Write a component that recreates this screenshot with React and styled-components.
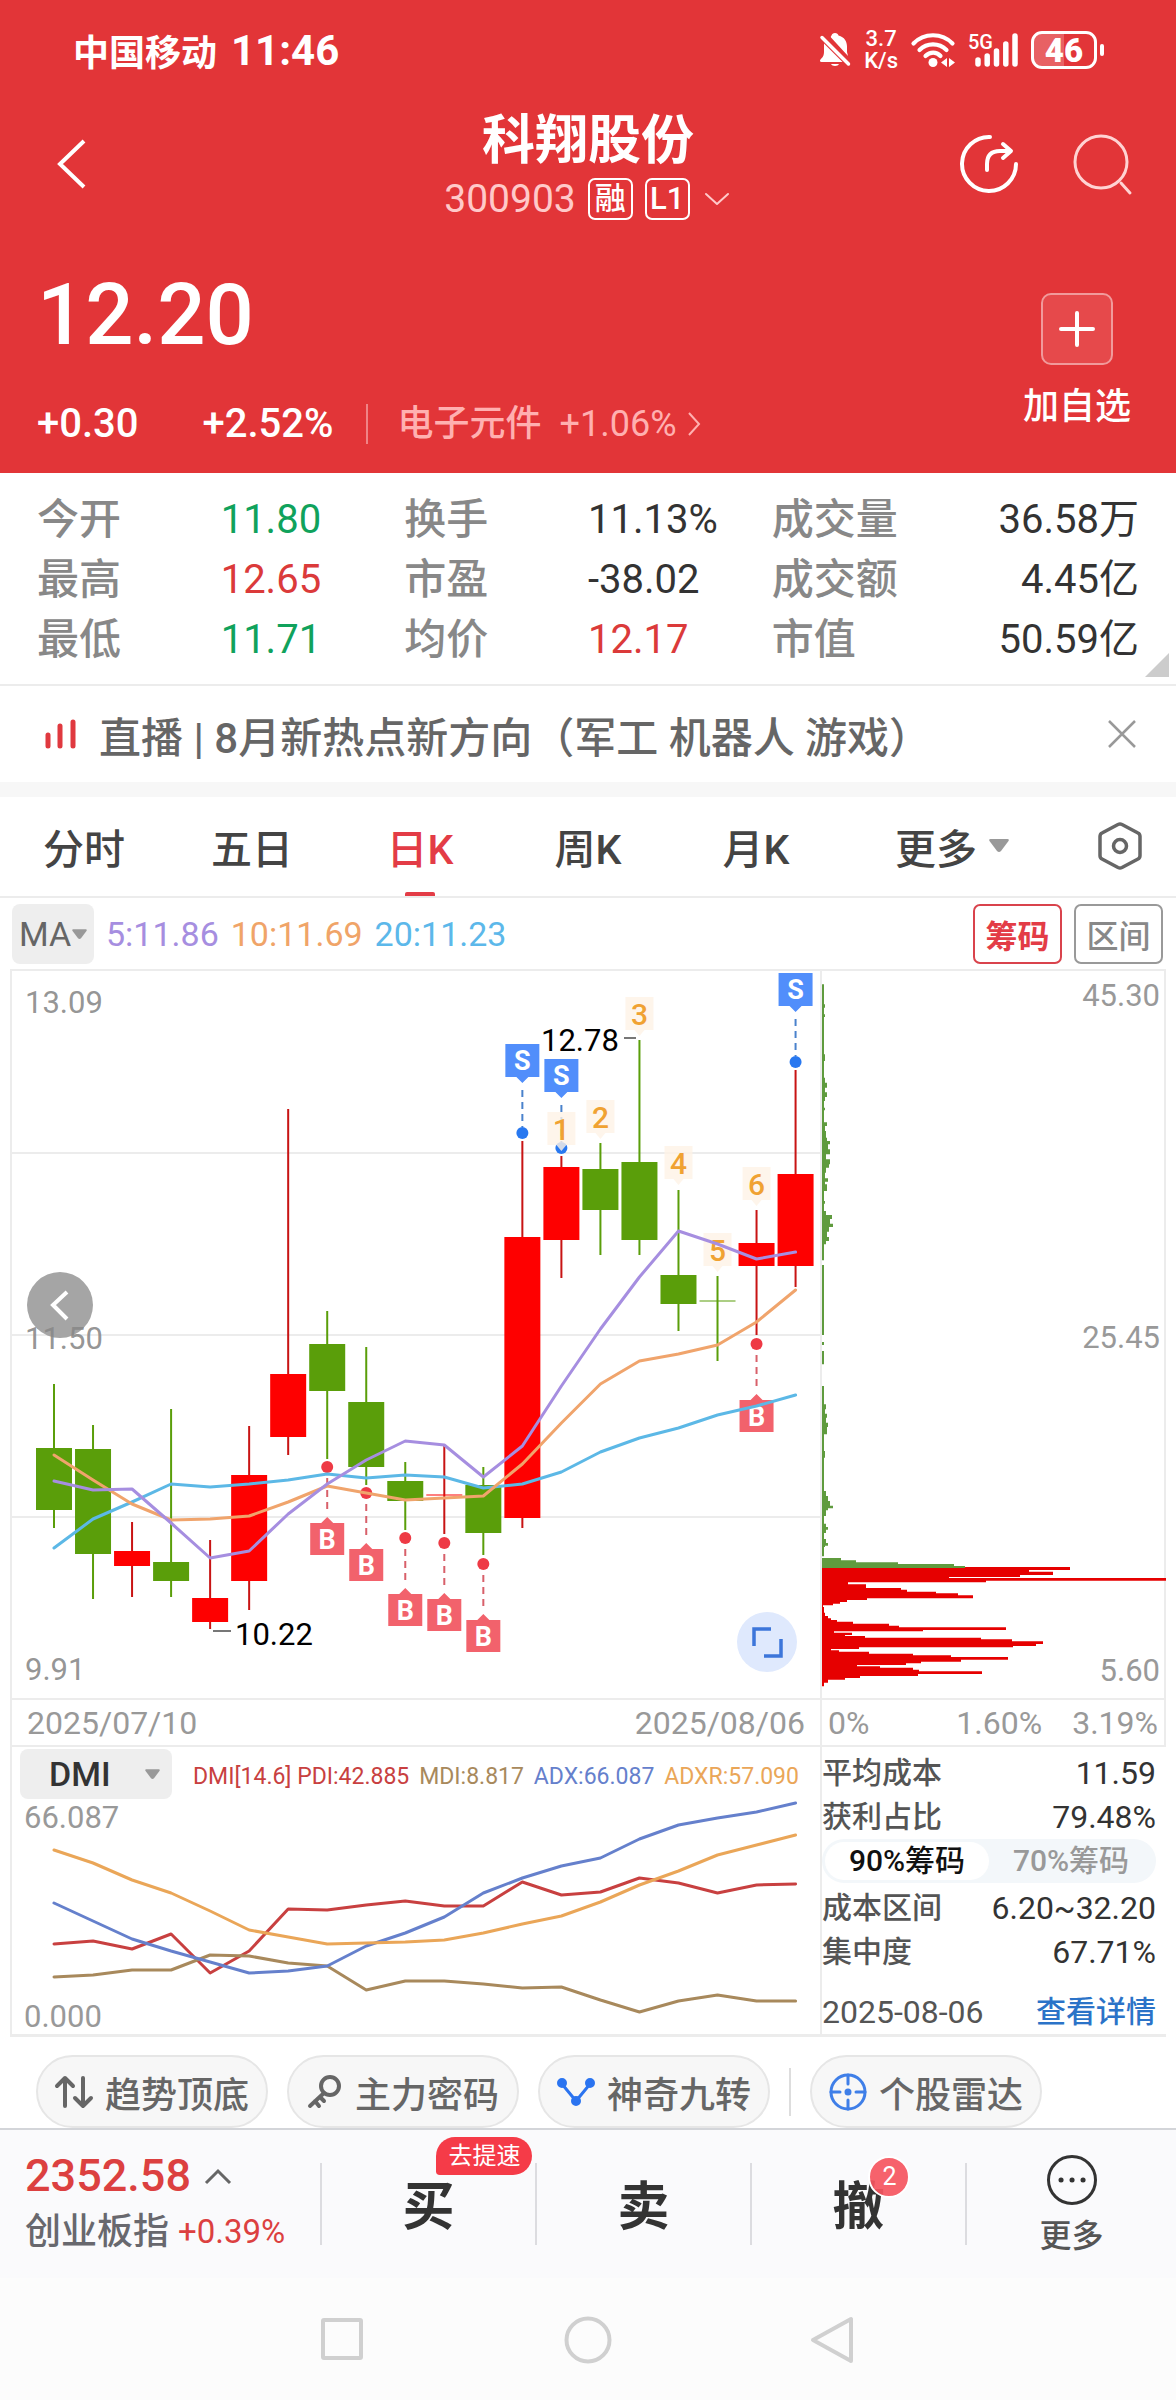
import React, { useState } from 'react';
import styled, { createGlobalStyle } from 'styled-components';

const GlobalStyle = createGlobalStyle`
    * {
        box-sizing: border-box;
    }
    body {
        margin: 0;
        background: #fff;
        color: #333;
        font-family: Roboto, "Noto Sans CJK SC", sans-serif;
        font-weight: 500;
    }
    button, select {
        margin: 0;
        padding: 0;
        border: 0;
        background: none;
        color: inherit;
        font: inherit;
        cursor: pointer;
    }
    a {
        color: inherit;
        text-decoration: none;
    }
    svg {
        display: block;
        flex-shrink: 0;
        overflow: visible;
    }
    dl, dd, h1, p {
        margin: 0;
    }
`;

const RED = '#e23538';
const LINE = '#ececec';

/* header */
const Header = styled.header`
    background: ${RED};
    color: #fff;
`;
const StatusBar = styled.div`
    display: flex;
    align-items: center;
    justify-content: space-between;
    height: 100px;
    padding: 0 72px 0 73px;
    font-size: 36px;
`;
const Carrier = styled.div`
    display: flex;
    align-items: center;
    gap: 14px;
    font-weight: 700;
`;
const Clock = styled.span`
    font-size: 42px;
`;
const StatusIcons = styled.div`
    display: flex;
    align-items: center;
    gap: 13px;
`;
const Speed = styled.div`
    display: grid;
    font-size: 22px;
    line-height: 22px;
    text-align: center;
`;
const Battery = styled.div`
    display: flex;
    align-items: center;
    gap: 3px;
    &:after {
        content: "";
        width: 4px;
        height: 12px;
        border-radius: 2px;
        background: #fff;
    }
`;
const BatteryBody = styled.div`
    width: 66px;
    height: 38px;
    border: 3px solid #fff;
    border-radius: 11px;
    background: linear-gradient(90deg, rgba(255, 255, 255, 0.22) 50%, transparent 50%);
    font-size: 33px;
    font-weight: 900;
    line-height: 33px;
    text-align: center;
`;
const TitleBar = styled.div`
    display: grid;
    grid-template-columns: 1fr auto 1fr;
    align-items: center;
    height: 127px;
    padding: 1px 43px 0;
`;
const BackButton = styled.button`
    padding-left: 13px;
`;
const TitleActions = styled.div`
    display: flex;
    justify-content: flex-end;
    gap: 54px;
`;
const StockName = styled.h1`
    font-size: 53px;
    font-weight: 700;
    line-height: 70px;
    text-align: center;
`;
const StockCode = styled.div`
    display: flex;
    align-items: center;
    gap: 12px;
    color: #ffc9c9;
    font-size: 39px;
    font-weight: 400;
    line-height: 46px;
`;
const Tag = styled.span`
    width: 45px;
    height: 42px;
    border: 2px solid #fff;
    border-radius: 7px;
    color: #fff;
    font-size: 31px;
    font-weight: 500;
    line-height: 38px;
    text-align: center;
`;
const Quote = styled.div`
    display: flex;
    justify-content: space-between;
    padding: 40px 45px 24px 37px;
`;
const Price = styled.div`
    font-size: 85px;
    line-height: 96px;
`;
const ChangeRow = styled.div`
    display: flex;
    align-items: center;
    margin-top: 36px;
    font-size: 40px;
    line-height: 50px;
`;
const Change = styled.span`
    margin-right: ${props => props.$gap}px;
`;
const Sector = styled.a`
    display: flex;
    align-items: center;
    gap: 10px;
    padding-left: 30px;
    border-left: 2px solid #f08486;
    color: #ffb0b0;
    font-size: 36px;
    line-height: 40px;
    > em {
        margin-left: 8px;
        font-style: normal;
        font-weight: 400;
    }
`;
const AddButton = styled.button`
    display: flex;
    flex-direction: column;
    align-items: center;
    gap: 17px;
    margin-top: 26px;
    font-size: 36px;
    line-height: 50px;
`;
const AddBox = styled.span`
    display: grid;
    place-items: center;
    width: 72px;
    height: 72px;
    border: 2px solid #f19a9b;
    border-radius: 10px;
    background: #e6494b;
`;

/* numbers under the header */
const Stats = styled.section`
    position: relative;
    display: flex;
    padding: 17px 37px 14px;
    border-bottom: 2px solid ${LINE};
`;
const StatColumn = styled.dl`
    flex: 1;
    display: grid;
    grid-template-columns: ${props => props.$end ? 'auto auto' : '1fr 1fr'};
    font-size: 42px;
    line-height: 60px;
    > dt {
        color: #888;
    }
    > dd {
        font-size: 40px;
        text-align: ${props => props.$end ? 'right' : 'left'};
    }
`;
const StatValue = styled.dd`
    color: ${props => props.$color || '#333'};
    font-weight: 400;
`;
const Corner = styled.span`
    position: absolute;
    right: 7px;
    bottom: 7px;
    border-style: solid;
    border-width: 0 0 24px 24px;
    border-color: transparent transparent #ccc transparent;
`;

const LiveBar = styled.section`
    display: flex;
    align-items: center;
    height: 111px;
    padding: 0 40px 0 45px;
    border-bottom: 15px solid #f7f7f7;
    color: #666;
    font-size: 42px;
`;
const LiveLink = styled.a`
    flex: 1;
    margin-left: 22px;
`;

/* period tabs */
const Tabs = styled.nav`
    display: flex;
    height: 101px;
    border-bottom: 2px solid ${LINE};
`;
const Tab = styled.button`
    position: relative;
    flex: ${props => props.$grow || 3} 1 0;
    display: flex;
    align-items: center;
    justify-content: center;
    gap: 12px;
    padding-bottom: 2px;
    color: ${props => props.$active ? '#e33c46' : '#444'};
    font-size: 41px;
    &:after {
        content: "";
        display: ${props => props.$active ? 'block' : 'none'};
        position: absolute;
        bottom: 0;
        width: 30px;
        height: 4px;
        border-radius: 2px 2px 0 0;
        background: #e33c46;
    }
`;

/* indicator line above the chart */
const Averages = styled.div`
    display: flex;
    align-items: center;
    gap: 12px;
    height: 71px;
    padding: 0 13px 0 12px;
    font-size: 34px;
    font-weight: 400;
`;
const Picker = styled.label`
    position: relative;
    display: block;
    width: ${props => props.$width}px;
    height: ${props => props.$height}px;
    > select {
        appearance: none;
        width: 100%;
        height: 100%;
        padding-left: ${props => props.$pad}px;
        border-radius: 8px;
        background: #eee;
        color: ${props => props.$color};
        font-size: 34px;
    }
    > svg {
        position: absolute;
        top: 50%;
        right: ${props => props.$arrow}px;
        margin-top: -5px;
        pointer-events: none;
    }
`;
const Average = styled.span`
    color: ${props => props.$color};
`;
const Toggle = styled.button`
    width: 89px;
    height: 60px;
    margin-left: ${props => props.$active ? 'auto' : '0'};
    border: 2px solid ${props => props.$active ? '#d9434c' : '#999'};
    border-radius: 7px;
    color: ${props => props.$active ? '#e33c46' : '#888'};
    font-size: 32px;
    font-weight: ${props => props.$active ? 700 : 500};
`;

/* charts */
const Charts = styled.section`
    display: grid;
    grid-template-columns: minmax(0, 812fr) minmax(0, 344fr);
    margin: 0 10px;
    border-top: 2px solid ${LINE};
    border-bottom: 3px solid ${LINE};
`;
const KColumn = styled.div`
    border-left: 2px solid ${LINE};
    border-right: 2px solid ${LINE};
`;
const ChipColumn = styled.div`
    display: flex;
    flex-direction: column;
`;
const ChipBox = styled.div`
    border-right: 2px solid ${LINE};
`;
const Plot = styled.svg`
    width: 100%;
    height: auto;
    font-size: 31px;
    font-weight: 400;
`;
const AxisRow = styled.div`
    display: flex;
    align-items: center;
    justify-content: space-between;
    height: 49px;
    padding: 0 ${props => props.$tight ? 6 : 15}px;
    border-top: 2px solid ${LINE};
    border-bottom: 2px solid ${LINE};
    color: #999;
    font-size: 32px;
    font-weight: 400;
`;
const AxisMiddle = styled.span`
    margin-left: auto;
    margin-right: 30px;
`;
const DmiHead = styled.div`
    display: flex;
    align-items: center;
    height: 54px;
    padding: 0 21px 0 8px;
`;
const DmiLegend = styled.div`
    flex: 1;
    display: flex;
    justify-content: space-between;
    margin-left: 21px;
    padding-top: 6px;
    font-size: 23px;
    font-weight: 400;
    line-height: 48px;
    white-space: nowrap;
`;

/* cost figures */
const Costs = styled.div`
    flex: 1;
    display: flex;
    flex-direction: column;
    padding: 4px 10px 0 0;
    font-size: 30px;
`;
const CostRow = styled.div`
    display: flex;
    justify-content: space-between;
    margin-top: ${props => props.$last ? 'auto' : '0'};
    line-height: 44px;
    color: #555;
    > strong {
        color: #333;
        font-size: 32px;
        font-weight: 400;
    }
    > time {
        font-size: 32px;
        font-weight: 400;
    }
    > a {
        color: #2b73c8;
    }
`;
const Segments = styled.div`
    display: flex;
    height: 44px;
    margin-bottom: 3px;
    padding: 3px;
    border-radius: 22px;
    background: #f3f7fa;
`;
const Segment = styled.button`
    flex: 1;
    border-radius: 19px;
    background: ${props => props.$active ? '#fff' : 'transparent'};
    color: ${props => props.$active ? '#111' : '#999'};
    font-size: 30px;
    line-height: 38px;
`;

const Tools = styled.div`
    display: flex;
    align-items: center;
    gap: 19px;
    padding: 18px 36px 0;
`;
const Tool = styled.button`
    display: flex;
    align-items: center;
    justify-content: center;
    gap: 12px;
    width: 232px;
    height: 73px;
    border: 2px solid #e6e6e6;
    border-radius: 37px;
    background: #f7f7f7;
    color: #666;
    font-size: 36px;
    white-space: nowrap;
`;
const ToolDivider = styled.span`
    width: 2px;
    height: 48px;
    background: #ddd;
`;

/* trade bar */
const TradeBar = styled.footer`
    display: grid;
    grid-template-columns: minmax(0, 320fr) repeat(3, minmax(0, 215fr)) minmax(0, 211fr);
    height: 150px;
    padding: 33px 0;
    border-top: 2px solid #d3d5d9;
    background: #fafafc;
`;
const IndexQuote = styled.div`
    display: flex;
    flex-direction: column;
    justify-content: space-between;
    margin: -12px 0;
    padding-left: 25px;
    color: #dc4040;
    white-space: nowrap;
`;
const IndexValue = styled.div`
    display: flex;
    align-items: center;
    gap: 14px;
    font-size: 45px;
    line-height: 50px;
`;
const IndexName = styled.div`
    display: flex;
    align-items: center;
    gap: 9px;
    color: #68686e;
    font-size: 36px;
    line-height: 50px;
    > span {
        color: #dc4040;
        font-size: 33px;
        font-weight: 400;
    }
`;
const TradeButton = styled.button`
    display: flex;
    align-items: center;
    justify-content: center;
    padding-bottom: 4px;
    border-left: 2px solid #dcdce0;
    font-size: 52px;
    font-weight: 700;
`;
const TradeLabel = styled.span`
    position: relative;
`;
const Ribbon = styled.span`
    position: absolute;
    left: 34px;
    bottom: 65px;
    width: 96px;
    border-radius: 20px 20px 20px 4px;
    background: #f53b48;
    color: #fff;
    font-size: 24px;
    font-weight: 400;
    line-height: 38px;
    text-align: center;
`;
const Count = styled.span`
    position: absolute;
    left: 36px;
    bottom: 42px;
    width: 42px;
    height: 42px;
    border: 2px solid #fff;
    border-radius: 50%;
    background: rgba(245, 85, 95, 0.92);
    color: #fff;
    font-size: 25px;
    font-weight: 400;
    line-height: 38px;
    text-align: center;
`;
const MoreButton = styled.button`
    display: flex;
    flex-direction: column;
    align-items: center;
    justify-content: space-between;
    border-left: 2px solid #dcdce0;
    color: #555;
    font-size: 32px;
    line-height: 18px;
    > svg {
        margin-top: -9px;
    }
`;
const SystemNav = styled.nav`
    display: flex;
    align-items: center;
    justify-content: center;
    gap: 197px;
    height: 123px;
    background: #fcfcfc;
`;

const Stroke = ({ size, box = 24, width = 2, color = 'currentColor', children }) => (
    <svg width={size} height={size} viewBox={`0 0 ${box} ${box}`} fill="none" stroke={color}
        strokeWidth={width} strokeLinecap="round" strokeLinejoin="round">
        {children}
    </svg>
);

const Arrow = ({ width = 20, height = 13 }) => (
    <svg width={width} height={height} viewBox="0 0 20 13" fill="#999">
        <path d="M1.5 0h17q2 0 1 2l-7.500 10q-2 2-4 0L.5 2q-1-2 1-2z" />
    </svg>
);

const BellOff = () => (
    <svg width="32" height="36" viewBox="0 0 32 36">
        <path d="M16 1c2 0 3 1 3.500 2.500 6 1.500 8.500 6 8.500 11V20l1 4L12 5.500c-.5-.5 0-1.500.5-2C13 2 14 1 16 1zM5 11.500L23.500 30H2.500c-1.500 0-2-1.500-1-2.500 2.500-2.500 3.500-4 3.500-8z" fill="#fff" />
        <path d="M12 32h8c-1 2.500-7 2.500-8 0z" fill="#fff" />
        <path d="M3 5.500L29.500 32" stroke="#fff" strokeWidth="3.500" strokeLinecap="round" />
    </svg>
);

const Wifi = () => (
    <svg width="44" height="36" viewBox="0 0 44 36">
        <g fill="none" stroke="#fff" strokeWidth="4.200" strokeLinecap="round">
            <path d="M2.500 11.500C13 .5 31 .5 41.500 11.500" />
            <path d="M8.500 18C16 10.500 28 10.500 35.500 18" />
            <path d="M14.500 24C19 19.500 25.500 19.500 29.500 24" />
        </g>
        <circle cx="22" cy="30.500" r="4.500" fill="#fff" />
        <path d="M36 26v9l-6-4.500zM38 26v9l6-4.500z" fill="#fff" />
    </svg>
);

const Signal = () => (
    <svg width="50" height="36" viewBox="0 0 50 36">
        <text x="0" y="17" fontSize="20" fill="#fff">5G</text>
        <g stroke="#fff" strokeWidth="5.500" strokeLinecap="round">
            <path d="M10 28v4M19.200 24v8M28.500 19v13M37.800 12v20M47 4v28" />
        </g>
    </svg>
);

// one entry per trading day: direction, high, body top, body bottom, low
const candles = [
    ['g', 1383, 1447, 1509, 1527], ['g', 1424, 1448, 1553, 1598],
    ['r', 1521, 1550, 1565, 1596], ['g', 1408, 1561, 1580, 1596],
    ['r', 1539, 1597, 1621, 1628], ['r', 1425, 1474, 1580, 1609],
    ['r', 1108, 1373, 1436, 1454], ['g', 1310, 1343, 1390, 1458],
    ['g', 1346, 1401, 1466, 1484], ['g', 1461, 1480, 1500, 1529],
    ['r', 1445, 1493, 1495, 1533], ['g', 1466, 1484, 1532, 1554],
    ['r', 1140, 1236, 1517, 1527], ['r', 1155, 1166, 1239, 1277],
    ['g', 1142, 1168, 1209, 1254], ['g', 1039, 1161, 1239, 1254],
    ['g', 1189, 1274, 1303, 1330], ['g', 1275, 1299, 1301, 1360],
    ['r', 1209, 1242, 1265, 1334], ['r', 1069, 1173, 1265, 1286],
];
const averages = [
    ['#5cb8e6', [1547, 1518, 1501, 1483, 1486, 1483, 1479, 1473, 1477, 1474, 1476, 1487, 1483, 1471, 1451, 1437, 1427, 1414, 1405, 1394]],
    ['#f0a46c', [1454, 1479, 1503, 1519, 1518, 1515, 1501, 1485, 1492, 1499, 1497, 1495, 1463, 1422, 1383, 1360, 1353, 1344, 1321, 1289]],
    ['#a68ee0', [1480, 1489, 1488, 1522, 1557, 1550, 1513, 1483, 1459, 1440, 1444, 1476, 1445, 1385, 1328, 1276, 1230, 1243, 1258, 1251]],
];
const buys = [[7, 1466], [8, 1492], [9, 1537], [10, 1542], [11, 1563], [18, 1343]];
const sells = [[12, 1132], [13, 1147], [19, 1061]];
const counts = [[13, 1111], [14, 1099], [15, 996], [16, 1145], [17, 1232], [18, 1166]];
const dmi = [
    ['#c84040', [1943, 1940, 1948, 1933, 1972, 1950, 1908, 1909, 1904, 1900, 1905, 1905, 1881, 1894, 1891, 1877, 1882, 1892, 1884, 1883]],
    ['#a8895c', [1976, 1974, 1969, 1969, 1954, 1955, 1962, 1965, 1989, 1980, 1980, 1983, 1987, 1986, 1999, 2011, 2000, 1994, 2000, 2000]],
    ['#6580cc', [1902, 1920, 1938, 1950, 1961, 1972, 1970, 1965, 1945, 1932, 1916, 1892, 1877, 1865, 1857, 1838, 1824, 1817, 1811, 1802]],
    ['#eaa658', [1849, 1862, 1879, 1892, 1910, 1929, 1936, 1943, 1942, 1941, 1939, 1932, 1923, 1915, 1901, 1884, 1870, 1854, 1844, 1834]],
];

// chip distribution: [level, width], three levels to a pixel
const greenChips = [
    [-1550, 2], [-1490, 3], [-1480, 2], [-1460, 3], [-1452, 2], [-1340, 3], [-1320, 2], [-1270, 3], [-1255, 5],
    [-1240, 3], [-1226, 5], [-1212, 3], [-1200, 2], [-1180, 3], [-1172, 2], [-1136, 5], [-1125, 3], [-1110, 4],
    [-1090, 5], [-1080, 8], [-1070, 6], [-1055, 8], [-1040, 4], [-1025, 8], [-1010, 7], [-1000, 4], [-985, 3],
    [-968, 6], [-958, 3], [-950, 5], [-930, 2], [-900, 3], [-892, 2], [-870, 4], [-858, 10], [-846, 8],
    [-832, 11], [-822, 7], [-808, 5], [-792, 7], [-780, 4], [-770, 2], [-722, 0], [-708, 2], [-498, 0],
    [-477, 2], [-468, 0], [-450, 2], [-410, 0], [-345, 2], [-290, 4], [-275, 3], [-262, 5], [-250, 4], [-235, 6],
    [-222, 5], [-200, 2], [-150, 3], [-130, 2], [-30, 4], [-15, 6], [0, 8], [14, 11], [22, 6], [28, 4], [45, 2],
    [68, 4], [78, 6], [86, 4], [96, 2], [114, 4], [126, 6], [134, 3], [138, 2], [166, 0], [171, 19], [178, 34],
    [184, 76], [189, 132], [195, 143], [201, 0],
];
const redChips = [
    [198, 248], [207, 207], [212, 231], [222, 198], [228, 127], [231, 344], [239, 164], [244, 26], [250, 44],
    [261, 79], [266, 85], [272, 114], [277, 136], [283, 151], [292, 45], [297, 25], [303, 18], [308, 11],
    [313, 1], [318, 2], [335, 3], [345, 6], [352, 9], [357, 15], [362, 31], [368, 67], [374, 77], [379, 184],
    [387, 101], [391, 12], [395, 30], [402, 23], [405, 43], [410, 159], [415, 190], [421, 221], [429, 214],
    [435, 191], [439, 37], [444, 9], [448, 17], [452, 47], [458, 91], [463, 129], [468, 186], [476, 139],
    [482, 99], [487, 84], [492, 35], [496, 58], [500, 91], [506, 97], [511, 160], [519, 96], [525, 38],
    [531, 23], [536, 6], [545, 2], [556, 0],
];

const dayX = i => 54 + i * 39.03;
const toPoints = values => values.map((y, i) => `${dayX(i)},${y}`).join(' ');
const toSteps = steps => steps.reduce((d, [level, width]) => `${d}V${1500 + level / 3}H${width}`, `M0 ${1500 + steps[0][0] / 3}`) + 'H0Z';

const Lines = ({ lines, width }) => lines.map(([color, values]) => (
    <polyline key={color} points={toPoints(values)} fill="none" stroke={color}
        strokeWidth={width} strokeLinejoin="round" strokeLinecap="round" />
));

const Candle = ({ x, data: [kind, high, top, bottom, low] }) => {
    const thin = bottom - top < 3;
    const color = kind === 'r' ? '#fe0000' : '#5a9e0a';
    return (
        <g fill={color}>
            <rect x={x - 1} y={high} width="2" height={low - high} fill={kind === 'r' ? '#c81414' : color} />
            <rect x={x - 18} y={top} width="36" height={bottom - top} opacity={thin ? 0.5 : 1} />
        </g>
    );
};

const KChart = () => (
    <Plot viewBox="12 970 808 727" role="img" aria-label="日K">
        <path d="M12 1152H820M12 1334H820M12 1516H820" stroke={LINE} strokeWidth="2" />
        {candles.map((data, i) => <Candle key={i} x={dayX(i)} data={data} />)}
        {buys.map(([day, y]) => (
            <g key={day} transform={`translate(${dayX(day)} ${y})`}>
                <circle r="6" fill="#ee3a45" />
                <path d="M0 11V46" stroke="#d8606a" strokeWidth="2" strokeDasharray="7 5" />
                <path d="M0 50l6 6h11v32h-34V56h11z" fill="#f2626c" />
                <text y="82" fill="#fff" fontSize="27" fontWeight="700" textAnchor="middle">B</text>
            </g>
        ))}
        {sells.map(([day, y]) => (
            <g key={day} transform={`translate(${dayX(day)} ${y})`}>
                <circle r="6" fill="#2878f0" />
                <path d="M0 -43V-6" stroke="#4a82cc" strokeWidth="2" strokeDasharray="7 5" />
                <path d="M-17 -89h34v33H6l-6 6-6-6h-11z" fill="#518efb" />
                <text y="-63" fill="#fff" fontSize="27" fontWeight="700" textAnchor="middle">S</text>
            </g>
        ))}
        {counts.map(([day, y], i) => (
            <g key={day} transform={`translate(${dayX(day)} ${y})`}>
                <path d="M-14 0h28v33H5l-5 6-5-6h-9z" fill="#fef3e6" opacity="0.8" />
                <text y="28" fill="#f0a232" fontSize="30" fontWeight="500" textAnchor="middle">{i + 1}</text>
            </g>
        ))}
        <Lines lines={averages} width="3" />
        <path d="M624 1037h12M213 1630h18" stroke="#777" strokeWidth="2" />
        <g fill="#000">
            <text x="541" y="1050">12.78</text>
            <text x="235" y="1644">10.22</text>
        </g>
        <circle cx="60" cy="1304" r="33" fill="#a5a5a5" />
        <path d="M67 1291L53 1304L67 1318" fill="none" stroke="#fff" strokeWidth="4" />
        <g fill="#888" fillOpacity="0.9">
            <text x="25" y="1012">13.09</text>
            <text x="25" y="1348">11.50</text>
            <text x="25" y="1679">9.91</text>
        </g>
        <circle cx="767" cy="1641" r="30" fill="#dfe9fd" />
        <path d="M754 1645V1628H771M781 1638V1655H764" fill="none" stroke="#3d76da" strokeWidth="3.500" />
    </Plot>
);

const ChipChart = () => (
    <Plot viewBox="0 970 342 727" role="img" aria-label="筹码">
        <path d={toSteps(redChips)} fill="#e60000" />
        <path d={toSteps(greenChips)} fill="#5f9b3e" />
        <g fill="#999" textAnchor="end">
            <text x="338" y="1005">45.30</text>
            <text x="338" y="1347">25.45</text>
            <text x="338" y="1680">5.60</text>
        </g>
    </Plot>
);

const DmiChart = () => (
    <Plot viewBox="12 1800 808 233" role="img" aria-label="DMI">
        <g fill="#999">
            <text x="24" y="1827">66.087</text>
            <text x="24" y="2026">0.000</text>
        </g>
        <Lines lines={dmi} width="3" />
    </Plot>
);

const UP = '#db3a3a';
const DOWN = '#10a25c';
const stats = [
    [['今开', '11.80', DOWN], ['最高', '12.65', UP], ['最低', '11.71', DOWN]],
    [['换手', '11.13%'], ['市盈', '-38.02'], ['均价', '12.17', UP]],
    [['成交量', '36.58万'], ['成交额', '4.45亿'], ['市值', '50.59亿']],
];
const periods = ['分时', '五日', '日K', '周K', '月K'];

const App = () => {
    const [period, setPeriod] = useState('日K');
    const [share, setShare] = useState('90%');

    return (
        <>
            <GlobalStyle />
            <Header>
                <StatusBar>
                    <Carrier>中国移动 <Clock>11:46</Clock></Carrier>
                    <StatusIcons>
                        <BellOff />
                        <Speed><span>3.7</span><span>K/s</span></Speed>
                        <Wifi />
                        <Signal />
                        <Battery><BatteryBody>46</BatteryBody></Battery>
                    </StatusIcons>
                </StatusBar>
                <TitleBar>
                    <BackButton aria-label="返回">
                        <svg width="30" height="50" viewBox="0 0 30 50" fill="none" stroke="#fff" strokeWidth="4">
                            <path d="M28 2L4 25L28 48" />
                        </svg>
                    </BackButton>
                    <div>
                        <StockName>科翔股份</StockName>
                        <StockCode>
                            300903
                            <Tag>融</Tag>
                            <Tag>L1</Tag>
                            <Stroke size={30} box={30}><path d="M4 10l11 10L26 10" /></Stroke>
                        </StockCode>
                    </div>
                    <TitleActions>
                        <button aria-label="分享">
                            <Stroke size={60} box={60} width={4}>
                                <path d="M31 3A27 27 0 1 0 57 30" />
                                <path d="M28 36V30Q28 17 41 17H51" />
                                <path d="M44 10L52 17L44 24" />
                            </Stroke>
                        </button>
                        <button aria-label="搜索">
                            <Stroke size={60} box={60} width={3} color="#ffd3d3">
                                <circle cx="28" cy="28" r="26" />
                                <path d="M48 49L57 59" />
                            </Stroke>
                        </button>
                    </TitleActions>
                </TitleBar>
                <Quote>
                    <div>
                        <Price>12.20</Price>
                        <ChangeRow>
                            <Change $gap={64}>+0.30</Change>
                            <Change $gap={32}>+2.52%</Change>
                            <Sector href="#sector">
                                电子元件 <em>+1.06%</em>
                                <svg width="14" height="24" viewBox="0 0 14 24" fill="none" stroke="currentColor" strokeWidth="2">
                                    <path d="M2 1L12 12L2 23" />
                                </svg>
                            </Sector>
                        </ChangeRow>
                    </div>
                    <AddButton>
                        <AddBox>
                            <Stroke size={36} box={36} width={4}><path d="M2 18h32M18 2v32" /></Stroke>
                        </AddBox>
                        加自选
                    </AddButton>
                </Quote>
            </Header>

            <Stats>
                {stats.map((column, i) => (
                    <StatColumn key={i} $end={i === 2}>
                        {column.map(([name, value, color]) => (
                            <React.Fragment key={name}>
                                <dt>{name}</dt>
                                <StatValue $color={color}>{value}</StatValue>
                            </React.Fragment>
                        ))}
                    </StatColumn>
                ))}
                <Corner />
            </Stats>

            <LiveBar>
                <svg width="32" height="30" viewBox="0 0 32 30" stroke="#e0393f" strokeWidth="5" strokeLinecap="round">
                    <path d="M3 16v11M15 7v20M28 3v24" />
                </svg>
                <LiveLink href="#live">直播 | 8月新热点新方向（军工 机器人 游戏）</LiveLink>
                <button aria-label="关闭">
                    <svg width="28" height="28" viewBox="0 0 28 28" stroke="#999" strokeWidth="2.500">
                        <path d="M1 1l26 26M27 1L1 27" />
                    </svg>
                </button>
            </LiveBar>

            <Tabs>
                {periods.map(name => (
                    <Tab key={name} $active={name === period} onClick={() => setPeriod(name)}>{name}</Tab>
                ))}
                <Tab $grow={4}>更多 <Arrow /></Tab>
                <Tab $grow={2} aria-label="设置">
                    <Stroke size={48} box={48} width={3.5} color="#666">
                        <path d="M22 2.500q2-1 4 0L42 11q2 1 2 3.500v19q0 2.500-2 3.500L26 45.500q-2 1-4 0L6 37q-2-1-2-3.500v-19Q4 12 6 11z" />
                        <circle cx="24" cy="24" r="6.500" />
                    </Stroke>
                </Tab>
            </Tabs>

            <Averages>
                <Picker $width={82} $height={60} $pad={7} $arrow={7} $color="#666">
                    <select aria-label="主图指标"><option>MA</option></select>
                    <Arrow width={15} height={10} />
                </Picker>
                <Average $color="#a68ee0">5:11.86</Average>
                <Average $color="#f0a468">10:11.69</Average>
                <Average $color="#5cb8ea">20:11.23</Average>
                <Toggle $active>筹码</Toggle>
                <Toggle>区间</Toggle>
            </Averages>

            <Charts>
                <KColumn>
                    <KChart />
                    <AxisRow><span>2025/07/10</span><span>2025/08/06</span></AxisRow>
                    <DmiHead>
                        <Picker $width={152} $height={50} $pad={29} $arrow={12} $color="#333">
                            <select aria-label="副图指标"><option>DMI</option></select>
                            <Arrow width={15} height={10} />
                        </Picker>
                        <DmiLegend>
                            <Average $color="#c84040">DMI[14.6] PDI:42.885</Average>
                            <Average $color="#a8895c">MDI:8.817</Average>
                            <Average $color="#6580cc">ADX:66.087</Average>
                            <Average $color="#eaa658">ADXR:57.090</Average>
                        </DmiLegend>
                    </DmiHead>
                    <DmiChart />
                </KColumn>
                <ChipColumn>
                    <ChipBox>
                        <ChipChart />
                        <AxisRow $tight><span>0%</span><AxisMiddle>1.60%</AxisMiddle><span>3.19%</span></AxisRow>
                    </ChipBox>
                    <Costs>
                        <CostRow>平均成本<strong>11.59</strong></CostRow>
                        <CostRow>获利占比<strong>79.48%</strong></CostRow>
                        <Segments>
                            {['90%', '70%'].map(value => (
                                <Segment key={value} $active={value === share} onClick={() => setShare(value)}>
                                    {value}筹码
                                </Segment>
                            ))}
                        </Segments>
                        <CostRow>成本区间<strong>6.20~32.20</strong></CostRow>
                        <CostRow>集中度<strong>67.71%</strong></CostRow>
                        <CostRow $last><time>2025-08-06</time><a href="#detail">查看详情</a></CostRow>
                    </Costs>
                </ChipColumn>
            </Charts>

            <Tools>
                <Tool>
                    <Stroke size={38} box={38} width={4}>
                        <path d="M10 33V5M2 13l8-8 8 8M28 5v28M20 25l8 8 8-8" />
                    </Stroke>
                    趋势顶底
                </Tool>
                <Tool>
                    <Stroke size={36} box={36} width={4}>
                        <circle cx="23" cy="12" r="9" />
                        <path d="M17 19L3 32M8 27l4 5M13 23l4 4" />
                    </Stroke>
                    主力密码
                </Tool>
                <Tool>
                    <Stroke size={38} box={38} width={3} color="#2b74f0">
                        <path d="M5 11L19 28L33 11" />
                        <g fill="#2b74f0">
                            <circle cx="5" cy="10" r="3.500" />
                            <circle cx="33" cy="10" r="3.500" />
                            <circle cx="19" cy="28" r="3.500" />
                        </g>
                    </Stroke>
                    神奇九转
                </Tool>
                <ToolDivider />
                <Tool>
                    <Stroke size={38} box={38} width={3} color="#3f7fe8">
                        <circle cx="19" cy="19" r="17" />
                        <path d="M19 2v9M19 27v9M2 19h9M27 19h9" />
                        <circle cx="19" cy="19" r="2" fill="#3f7fe8" />
                    </Stroke>
                    个股雷达
                </Tool>
            </Tools>

            <TradeBar>
                <IndexQuote>
                    <IndexValue>
                        2352.58
                        <svg width="26" height="16" viewBox="0 0 26 16" fill="none" stroke="#666" strokeWidth="3">
                            <path d="M1 15L13 3L25 15" />
                        </svg>
                    </IndexValue>
                    <IndexName>创业板指<span>+0.39%</span></IndexName>
                </IndexQuote>
                <TradeButton><TradeLabel>买<Ribbon>去提速</Ribbon></TradeLabel></TradeButton>
                <TradeButton>卖</TradeButton>
                <TradeButton><TradeLabel>撤<Count>2</Count></TradeLabel></TradeButton>
                <MoreButton>
                    <Stroke size={52} box={52} width={3} color="#333">
                        <circle cx="26" cy="26" r="23.500" />
                        <path d="M15 26h.1M26 26h.1M37 26h.1" strokeWidth="5" />
                    </Stroke>
                    更多
                </MoreButton>
            </TradeBar>
            <SystemNav>
                <button aria-label="最近任务">
                    <Stroke size={48} box={48} width={4} color="#d0d0d0"><rect x="4" y="4" width="38" height="38" rx="1" /></Stroke>
                </button>
                <button aria-label="主页">
                    <Stroke size={48} box={48} width={4} color="#d0d0d0"><circle cx="24" cy="24" r="21.500" /></Stroke>
                </button>
                <button aria-label="后退">
                    <Stroke size={48} box={48} width={4} color="#d0d0d0"><path d="M42 3V45L4 24z" /></Stroke>
                </button>
            </SystemNav>
        </>
    );
};

export default App;
